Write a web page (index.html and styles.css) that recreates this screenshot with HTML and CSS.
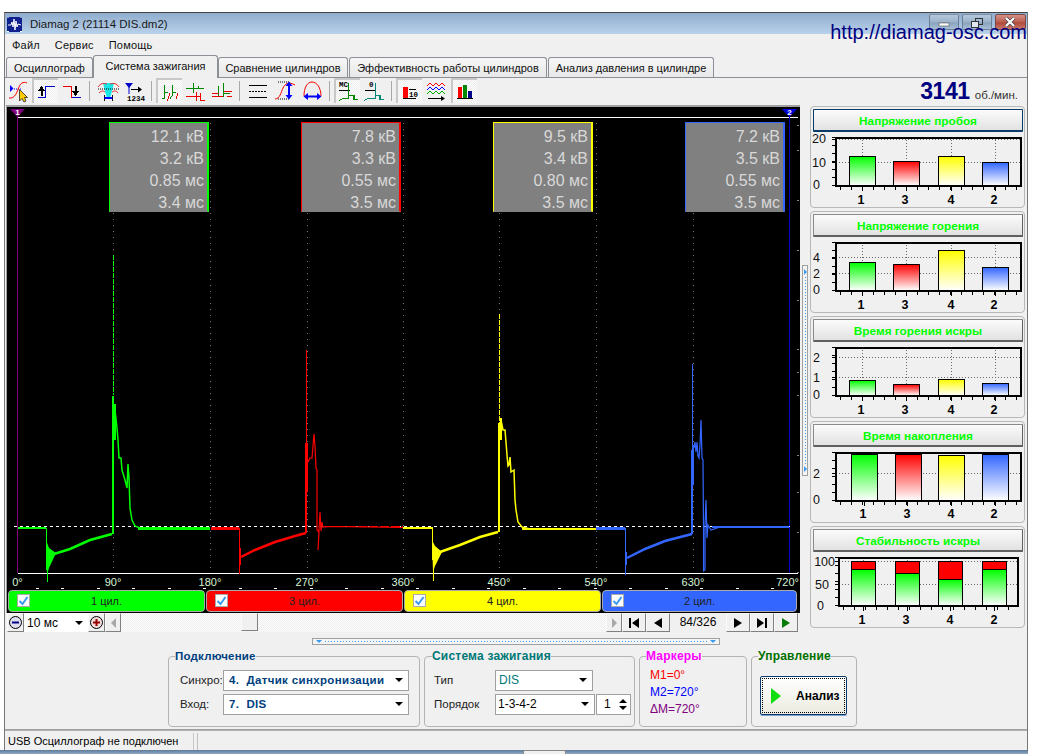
FILE: index.html
```html
<!DOCTYPE html>
<html lang="ru">
<head>
<meta charset="utf-8">
<title>Diamag 2</title>
<link rel="stylesheet" href="styles.css">
</head>
<body>
<div class="window">
  <header class="titlebar">
    <svg class="app-icon" viewBox="0 0 15 15" width="15" height="15"><rect width="15" height="15" fill="#10208c"/><path d="M0 0h2M13 0h2M0 14.500h2M13 14.500h2" stroke="#fff"/><path d="M1 8H4L5 5 6 10 7 2 8 13 9 4 10 10 11 7 14 8" fill="none" stroke="#fff"/></svg>
    <span class="title-text">Diamag 2 (21114 DIS.dm2)</span>
    <div class="win-buttons">
      <div class="win-btn"><svg viewBox="0 0 30 16" width="30" height="16"><rect x="10" y="9" width="10" height="3" fill="#fff" stroke="#555" stroke-width=".6"/></svg></div>
      <div class="win-btn"><svg viewBox="0 0 30 16" width="30" height="16"><rect x="13.500" y="4.500" width="7" height="6" fill="none" stroke="#333"/><rect x="9.500" y="7.500" width="7" height="6" fill="#dfe8f0" stroke="#333"/></svg></div>
      <div class="win-btn win-close"><svg viewBox="0 0 30 16" width="30" height="16"><path d="M11 4L19 12M19 4L11 12" stroke="#444" stroke-width="3.600"/><path d="M11 4L19 12M19 4L11 12" stroke="#fff" stroke-width="2.200"/></svg></div>
    </div>
  </header>
  <a class="site-url">http://diamag-osc.com</a>
  <nav class="menu"><span>Файл</span><span>Сервис</span><span>Помощь</span></nav>
  <div class="tabs">
    <div class="tab tab-1">Осциллограф</div>
    <div class="tab tab-2 active">Система зажигания</div>
    <div class="tab tab-3">Сравнение цилиндров</div>
    <div class="tab tab-4">Эффективность работы цилиндров</div>
    <div class="tab tab-5">Анализ давления в цилиндре</div>
  </div>
  <div class="content">
    <div class="toolbar">
      <div class="tool"><svg viewBox="0 0 26 25"><path d="M4 7L7.500 10.500 4 14Z" fill="#00f"/><path d="M8 11H16" stroke="#00f" stroke-dasharray="1 1"/><path d="M3 20C9 21 11 14 13 9 14 6 17 3 21 5" fill="none" stroke="#f00"/><path d="M13.500 11.500V23L16 20.500 18 24 20 23 18.500 19.500H21.500Z" fill="#fc0" stroke="#222" stroke-width=".8"/></svg></div>
      <div class="tool pressed"><svg viewBox="0 0 26 25" class="crisp"><path d="M6 19.500H13.500V8.500H23" fill="none" stroke="#00c"/><path d="M9.500 18V12" stroke="#000" stroke-width="2"/><path d="M6 13L9.500 8 13 13Z"/></svg></div>
      <div class="tool"><svg viewBox="0 0 26 25" class="crisp"><path d="M5 8.500H13.500V19.500" fill="none" stroke="#e00"/><path d="M13.500 19.500H23" stroke="#00c"/><path d="M17.500 8V14" stroke="#000" stroke-width="2"/><path d="M14 13L17.500 18 21 13Z"/></svg></div>
      <div class="tool-sep sep-a"></div>
      <div class="tool"><svg viewBox="0 0 26 25"><path d="M9 5H20L17.500 15 16 20H13L11.500 15Z" fill="#19e6e6"/><path d="M4 9C7 5 9 5 13 6M16 6C20 5 22 5 25 9M5 15C8 12 9 13 11 14M18 14C20 13 22 12 24 15" fill="none" stroke="#e22"/><path d="M4 11H25" stroke="#000" stroke-dasharray="1 1"/><path d="M10.500 17V23M18.500 17V23" stroke="#111"/><path d="M10.500 20H18.500" stroke="#00f" stroke-width="2"/></svg></div>
      <div class="tool"><svg viewBox="0 0 26 25"><path d="M5 5H13L9 10Z" fill="#00c"/><path d="M9 9V16" stroke="#00c"/><path d="M11 11.500H19" stroke="#000"/><path d="M18 8.500L22 11.500 18 14.500Z"/><text x="7" y="22.500" class="icon-text">1234</text></svg></div>
      <div class="tool-sep sep-b"></div>
      <div class="tool pressed"><svg viewBox="0 0 26 25" class="crisp"><path d="M6 20.500H8.500V7M8.500 14.500H11.500M14 20.500L16.500 17.500V7M16.500 14.500H20" fill="none" stroke="#080"/><path d="M11.500 23L14 15M20 20.500L22 15" fill="none" stroke="#e00"/></svg></div>
      <div class="tool"><svg viewBox="0 0 26 25" class="crisp"><path d="M4 10.500H11.500M11.500 5V15M11.500 10.500H16.500V8M16.500 10.500H22" fill="none" stroke="#080"/><path d="M4 18.500H14.500V14M14.500 23V18.500H18.500V15M18.500 18.500V22H23" fill="none" stroke="#e00"/></svg></div>
      <div class="tool"><svg viewBox="0 0 26 25" class="crisp"><path d="M10.500 8V18H15.500V5M15.500 15H22" fill="none" stroke="#080"/><path d="M4 15.500H10.500M15.500 13.500H24M4 18.500H15M19 18.500H24" fill="none" stroke="#e00"/></svg></div>
      <div class="tool-sep sep-c"></div>
      <div class="tool"><svg viewBox="0 0 26 25" class="crisp"><path d="M5 7.500H23M5 19.500H23" stroke="#000"/><path d="M5 13.500H23" stroke="#000" stroke-dasharray="2 1"/></svg></div>
      <div class="tool"><svg viewBox="0 0 26 25"><path d="M5 21C10 21 11 14 13 10 15 6 18 3 25 7" fill="none" stroke="#f00"/><path d="M8 4H19M8 21H19" stroke="#000" stroke-dasharray="1 1"/><path d="M19 7V18" stroke="#00f" stroke-width="2"/><path d="M15.500 8L19 3.500 22.500 8ZM15.500 17L19 21.500 22.500 17Z" fill="#00f"/></svg></div>
      <div class="tool"><svg viewBox="0 0 26 25"><path d="M8 18C8 10 11 4 16 4 21 4 25 10 25 18" fill="none" stroke="#f00"/><path d="M11 18.500H22" stroke="#00f" stroke-width="2"/><path d="M12 15L7.500 18.500 12 22ZM21 15L25.500 18.500 21 22Z" fill="#00f"/></svg></div>
      <div class="tool-sep sep-d"></div>
      <div class="tool pressed"><svg viewBox="0 0 26 25" class="crisp"><text x="5" y="9" class="icon-text">MC</text><path d="M5 12.500H16" stroke="#000"/><path d="M5 22.500L9 20.500H14.500V5M14.500 17.500H20V21.500H24" fill="none" stroke="#080" stroke-width="1.200"/></svg></div>
      <div class="tool"><svg viewBox="0 0 26 25" class="crisp"><text x="9" y="9" class="icon-text">0</text><path d="M5 12.500H15" stroke="#000"/><path d="M4 22.500L8 20.500H15.500V5M15.500 17.500H20V21.500H24" fill="none" stroke="#087" stroke-width="1.200"/></svg></div>
      <div class="tool-sep sep-e"></div>
      <div class="tool pressed"><svg viewBox="0 0 26 25" class="crisp"><rect x="7" y="9" width="4.500" height="11" fill="#f00"/><path d="M7 20.500H20M13 11.500H20" stroke="#000"/><text x="13" y="19" class="icon-text">10</text></svg></div>
      <div class="tool tool-wide"><svg viewBox="0 0 29 25" width="29" height="25"><path d="M5 8L8 5 11 8 14 5 17 8 20 5 23 8" fill="none" stroke="#f00"/><path d="M5 12L8 9 11 12 14 9 17 12 20 9 23 12" fill="none" stroke="#00f"/><path d="M5 16L8 13 11 16 14 13 17 16 20 13 23 16" fill="none" stroke="#0a0"/><path d="M6 20.500H20" stroke="#000"/><path d="M19 18L23 20.500 19 23Z"/></svg></div>
      <div class="tool pressed"><svg viewBox="0 0 26 25" class="crisp"><rect x="7" y="9" width="4" height="11" fill="#f00"/><rect x="12" y="7" width="4" height="13" fill="#080"/><rect x="17" y="13" width="4" height="7" fill="#008"/><path d="M6 20.500H22" stroke="#000"/></svg></div>
      <div class="rpm"><b>3141</b><span>об./мин.</span></div>
    </div>

    <div class="work">
      <div class="left-col">
        <div class="scope">
          <svg class="scope-svg crisp" viewBox="7 107 793 483" width="793" height="483">
            <path d="M113 117V573M210 117V573M307 117V573M403 117V573M499 117V573M596 117V573M693 117V573" stroke="#777" stroke-dasharray="1 5"/>
            <path d="M18 117.500H798M18 573.500H798" stroke="#fff"/>
            <path d="M17.500 115V573" stroke="#800080"/>
            <path d="M789.500 115V573" stroke="#0000c8"/>
            <path d="M797 125H799M797 150H799M797 200H799M797 250H799M797 300H799M797 349H799M797 372H799M797 395H799M797 455H799M797 492H799M797 532H799M797 572H799" stroke="#888"/>
            <path d="M10 109H25L17.500 117Z" fill="#800080" shape-rendering="auto"/>
            <path d="M782 109H797L789.500 117Z" fill="#0000e0" shape-rendering="auto"/>
            <text x="17.500" y="115" class="flag">1</text>
            <text x="789.500" y="115" class="flag">2</text>
            <path d="M14 526.500H790" stroke="#fff" stroke-dasharray="3 3"/>

            <g class="trace" stroke="#00ff00" fill="#00ff00">
              <path d="M18 528H46" stroke-width="2"/>
              <path d="M46 528V570M47.500 545V582" stroke-width="1"/>
              <path d="M46 540L49 548 56 553 49 568 47 575Z" stroke="none" shape-rendering="auto"/>
              <path d="M54 554L70 549 90 540 112 534" fill="none" stroke-width="2.500" shape-rendering="auto"/>
              <path d="M112.500 534V396" stroke-width="2"/>
              <path d="M113.500 255V395" stroke-dasharray="5 1"/>
              <path d="M113 400V470M115 404V440" stroke-width="2"/>
              <path d="M115 410L117 428 118 440 119 458 121 458 122 470 125 480 127 488 128 464 129 478 130 508 132 520 135 526 140 528" fill="none" stroke-width="1.500" shape-rendering="auto"/>
              <path d="M138 528.500H210" stroke-width="3"/>
            </g>
            <g class="trace" stroke="#ff0000" fill="#ff0000">
              <path d="M211 528.500H239" stroke-width="2.500"/>
              <path d="M239.500 528V574M240.500 548V565" stroke-width="1.500"/>
              <path d="M241 557L255 550 275 542 295 536 306 533" fill="none" stroke-width="2.500" shape-rendering="auto"/>
              <path d="M306 533V443" stroke-width="2"/>
              <path d="M306.500 350V445" stroke-width="1.500"/>
              <path d="M307.500 443V492" stroke-width="1.500"/>
              <path d="M308 462L310 458 312 458 313 446 314 434 315 446 316 468 317 470 317 530 319 532 318 550 320 512 321 531 322 522 323 527 330 526.500 403 527.500" fill="none" stroke-width="1.200" shape-rendering="auto"/>
              <path d="M325 526H403" stroke-width="1" stroke-dasharray="9 2"/>
            </g>
            <g class="trace" stroke="#ffff00" fill="#ffff00">
              <path d="M403 527.500H432" stroke-width="2"/>
              <path d="M432.500 527V560M433.500 545V581" stroke-width="1"/>
              <path d="M432 540L435 546 442 552 435 566 433 572Z" stroke="none" shape-rendering="auto"/>
              <path d="M440 552L460 545 480 537 498 532" fill="none" stroke-width="2.500" shape-rendering="auto"/>
              <path d="M498.500 532V425" stroke-width="2"/>
              <path d="M499.500 314V423" stroke-dasharray="5 1"/>
              <path d="M499 423V476M501 418V440" stroke-width="2"/>
              <path d="M501 420L503 430 505 430 506 442 507 455 508 466 509 465 510 457 511 472 514 470 515 500 516 510 518 522 522 527 530 529" fill="none" stroke-width="1.500" shape-rendering="auto"/>
              <path d="M522 529H596" stroke-width="2.500"/>
            </g>
            <g class="trace" stroke="#3366ff" fill="#3366ff">
              <path d="M596 528.500H625" stroke-width="2.500"/>
              <path d="M625.500 528V575M626.500 552V565" stroke-width="1.500"/>
              <path d="M627 558L645 549 665 541 692 534" fill="none" stroke-width="2.500" shape-rendering="auto"/>
              <path d="M691.500 534V450" stroke-width="2"/>
              <path d="M692.500 364V450" stroke-width="1.500"/>
              <path d="M693 445V485" stroke-width="1.500"/>
              <path d="M694 448L695 442 696 452 697 442 698 456 699 458 700 445 701 420 702 458 703 460 703.500 528 703.500 571 705 570 705 525 706 500 707 538 708 525 711 530 720 527" fill="none" stroke-width="1.200" shape-rendering="auto"/>
              <path d="M712 527H789" stroke-width="1.500"/>
            </g>

            <path class="tick-row" d="M36 588.500H39M61 588.500H64M97 588.500H100M132 588.500H135M168 588.500H171M203 588.500H206M239 588.500H242M274 588.500H277M310 588.500H313M345 588.500H348M381 588.500H384M416 588.500H419M452 588.500H455M487 588.500H490M523 588.500H526M558 588.500H561M594 588.500H597M629 588.500H632M665 588.500H668M700 588.500H703M736 588.500H739M771 588.500H774" stroke="#fff"/>
            <g class="deg">
              <text x="17.500" y="586">0°</text><text x="113" y="586">90°</text><text x="210" y="586">180°</text><text x="307" y="586">270°</text><text x="403" y="586">360°</text><text x="499" y="586">450°</text><text x="596" y="586">540°</text><text x="693" y="586">630°</text><text x="799" y="586" class="deg-end">720°</text>
            </g>
          </svg>
          <div class="readout r-1"><span>12.1 кВ</span><span>3.2 кВ</span><span>0.85 мс</span><span>3.4 мс</span></div>
          <div class="readout r-3"><span>7.8 кВ</span><span>3.3 кВ</span><span>0.55 мс</span><span>3.5 мс</span></div>
          <div class="readout r-4"><span>9.5 кВ</span><span>3.4 кВ</span><span>0.80 мс</span><span>3.5 мс</span></div>
          <div class="readout r-2"><span>7.2 кВ</span><span>3.5 кВ</span><span>0.55 мс</span><span>3.5 мс</span></div>
          <div class="legend">
            <div class="cyl c-g"><i class="check"><svg viewBox="0 0 11 11" width="11" height="11"><path d="M1.500 6L4.500 9 9.500 2" fill="none" stroke="#3a9af0" stroke-width="2"/></svg></i>1 цил.</div>
            <div class="cyl c-r"><i class="check"><svg viewBox="0 0 11 11" width="11" height="11"><path d="M1.500 6L4.500 9 9.500 2" fill="none" stroke="#3a9af0" stroke-width="2"/></svg></i>3 цил.</div>
            <div class="cyl c-y"><i class="check"><svg viewBox="0 0 11 11" width="11" height="11"><path d="M1.500 6L4.500 9 9.500 2" fill="none" stroke="#3a9af0" stroke-width="2"/></svg></i>4 цил.</div>
            <div class="cyl c-b"><i class="check"><svg viewBox="0 0 11 11" width="11" height="11"><path d="M1.500 6L4.500 9 9.500 2" fill="none" stroke="#3a9af0" stroke-width="2"/></svg></i>2 цил.</div>
          </div>
        </div>
        <div class="scroll-row">
          <div class="sbtn s-17"><svg viewBox="0 0 15 15" width="15" height="15"><circle cx="7.500" cy="7.500" r="6" fill="#dde" stroke="#000"/><path d="M4 7.500H11" stroke="#008" stroke-width="2"/></svg></div>
          <div class="time-select"><span>10 мс</span><i class="caret"></i></div>
          <div class="sbtn s-17"><svg viewBox="0 0 15 15" width="15" height="15"><circle cx="7.500" cy="7.500" r="6" fill="#edd" stroke="#000"/><path d="M4 7.500H11M7.500 4V11" stroke="#900" stroke-width="2"/></svg></div>
          <div class="sbtn s-16"><i class="tri-left"></i></div>
          <div class="track"><div class="thumb"></div></div>
          <div class="sbtn s-16"><i class="tri-right"></i></div>
          <div class="sbtn s-23"><svg viewBox="0 0 12 10" width="12" height="10"><path d="M1 0H3V10H1ZM11 0V10L4 5Z"/></svg></div>
          <div class="sbtn s-23"><svg viewBox="0 0 12 10" width="12" height="10"><path d="M10 0V10L2 5Z"/></svg></div>
          <div class="counter">84/326</div>
          <div class="sbtn s-23"><svg viewBox="0 0 12 10" width="12" height="10"><path d="M2 0V10L10 5Z"/></svg></div>
          <div class="sbtn s-23"><svg viewBox="0 0 12 10" width="12" height="10"><path d="M1 0V10L8 5ZM9 0H11V10H9Z"/></svg></div>
          <div class="sbtn s-23"><svg viewBox="0 0 12 10" width="12" height="10"><path d="M2 0V10L10 5Z" fill="#0a7a0a"/></svg></div>
        </div>
      </div>

      <div class="vsplit"><i class="sp-tri"></i><i class="sp-dots"></i><i class="sp-tri"></i></div>

      <aside class="right-col">
        <svg class="defs-holder" width="0" height="0"><defs>
          <linearGradient id="gg" x1="0" y1="0" x2="0" y2="1"><stop offset="0" stop-color="#0f0"/><stop offset="1" stop-color="#fff"/></linearGradient>
          <linearGradient id="gr" x1="0" y1="0" x2="0" y2="1"><stop offset="0" stop-color="#f00"/><stop offset="1" stop-color="#fff"/></linearGradient>
          <linearGradient id="gy" x1="0" y1="0" x2="0" y2="1"><stop offset="0" stop-color="#ff0"/><stop offset="1" stop-color="#fff"/></linearGradient>
          <linearGradient id="gb" x1="0" y1="0" x2="0" y2="1"><stop offset="0" stop-color="#36f"/><stop offset="1" stop-color="#fff"/></linearGradient>
        </defs></svg>

        <section class="chart-panel">
          <div class="chart-btn focus">Напряжение пробоя</div>
          <svg class="chart" viewBox="811 133 213 74" width="213" height="74">
            <path class="grid" d="M836 139.500H1021M836 162.500H1021M862.500 137V186M906.500 137V186M951.500 137V186M995.500 137V186"/>
            <rect class="bar" x="849.500" y="156.500" width="26" height="29" fill="url(#gg)"/><rect class="bar" x="893.500" y="161.500" width="26" height="24" fill="url(#gr)"/><rect class="bar" x="938.500" y="156.500" width="26" height="29" fill="url(#gy)"/><rect class="bar" x="982.500" y="162.500" width="26" height="23" fill="url(#gb)"/>
            <rect class="frame" x="836" y="137.500" width="185" height="48"/>
            <path class="ticks-y" d="M834 137V186"/><path class="ticks-x" d="M840 188H1021"/>
            <path class="ticks-m" d="M832 139.500H836M832 162.500H836M832 185.500H836M862.500 186V191M906.500 186V191M951.500 186V191M995.500 186V191"/>
            <g class="ylab"><text x="826" y="143">20</text><text x="826" y="167">10</text><text x="820" y="189">0</text></g>
            <g class="xlab"><text x="861" y="204">1</text><text x="905" y="204">3</text><text x="951" y="204">4</text><text x="994" y="204">2</text></g>
          </svg>
        </section>

        <section class="chart-panel">
          <div class="chart-btn">Напряжение горения</div>
          <svg class="chart" viewBox="811 133 213 74" width="213" height="74">
            <path class="grid" d="M836 152.500H1021M836 168.500H1021M862.500 137V186M906.500 137V186M951.500 137V186M995.500 137V186"/>
            <rect class="bar" x="849.500" y="157.500" width="26" height="28" fill="url(#gg)"/><rect class="bar" x="893.500" y="159.500" width="26" height="26" fill="url(#gr)"/><rect class="bar" x="938.500" y="145.500" width="26" height="40" fill="url(#gy)"/><rect class="bar" x="982.500" y="162.500" width="26" height="23" fill="url(#gb)"/>
            <rect class="frame" x="836" y="137.500" width="185" height="48"/>
            <path class="ticks-y" d="M834 137V186"/><path class="ticks-x" d="M840 188H1021"/>
            <path class="ticks-m" d="M832 152.500H836M832 168.500H836M832 185.500H836M862.500 186V191M906.500 186V191M951.500 186V191M995.500 186V191"/>
            <g class="ylab"><text x="820" y="157">4</text><text x="820" y="173">2</text><text x="820" y="189">0</text></g>
            <g class="xlab"><text x="861" y="204">1</text><text x="905" y="204">3</text><text x="951" y="204">4</text><text x="994" y="204">2</text></g>
          </svg>
        </section>

        <section class="chart-panel">
          <div class="chart-btn">Время горения искры</div>
          <svg class="chart" viewBox="811 133 213 74" width="213" height="74">
            <path class="grid" d="M836 147.500H1021M836 167.500H1021M862.500 137V186M906.500 137V186M951.500 137V186M995.500 137V186"/>
            <rect class="bar" x="849.500" y="170.500" width="26" height="15" fill="url(#gg)"/><rect class="bar" x="893.500" y="174.500" width="26" height="11" fill="url(#gr)"/><rect class="bar" x="938.500" y="169.500" width="26" height="16" fill="url(#gy)"/><rect class="bar" x="982.500" y="173.500" width="26" height="12" fill="url(#gb)"/>
            <rect class="frame" x="836" y="137.500" width="185" height="48"/>
            <path class="ticks-y" d="M834 137V186"/><path class="ticks-x" d="M840 188H1021"/>
            <path class="ticks-m" d="M832 147.500H836M832 167.500H836M832 185.500H836M862.500 186V191M906.500 186V191M951.500 186V191M995.500 186V191"/>
            <g class="ylab"><text x="820" y="152">2</text><text x="820" y="172">1</text><text x="820" y="189">0</text></g>
            <g class="xlab"><text x="861" y="204">1</text><text x="905" y="204">3</text><text x="951" y="204">4</text><text x="994" y="204">2</text></g>
          </svg>
        </section>

        <section class="chart-panel">
          <div class="chart-btn">Время накопления</div>
          <svg class="chart" viewBox="811 133 213 74" width="213" height="74">
            <path class="grid" d="M836 158.500H1021M864.500 137V186M907.500 137V186M951.500 137V186M995.500 137V186"/>
            <rect class="bar" x="851.500" y="139.500" width="26" height="46" fill="url(#gg)"/><rect class="bar" x="895.500" y="139.500" width="26" height="46" fill="url(#gr)"/><rect class="bar" x="938.500" y="140.500" width="26" height="45" fill="url(#gy)"/><rect class="bar" x="982.500" y="139.500" width="26" height="46" fill="url(#gb)"/>
            <rect class="frame" x="836" y="137.500" width="185" height="48"/>
            <path class="ticks-y" d="M834 137V186"/><path class="ticks-x" d="M840 188H1021"/>
            <path class="ticks-m" d="M832 158.500H836M832 185.500H836M864.500 186V191M907.500 186V191M951.500 186V191M995.500 186V191"/>
            <g class="ylab"><text x="820" y="163">2</text><text x="820" y="189">0</text></g>
            <g class="xlab"><text x="863" y="203">1</text><text x="907" y="203">3</text><text x="951" y="203">4</text><text x="994" y="203">2</text></g>
          </svg>
        </section>

        <section class="chart-panel">
          <div class="chart-btn">Стабильность искры</div>
          <svg class="chart" viewBox="811 133 213 74" width="213" height="74">
            <path class="grid" d="M839 141.500H1018M839 164.500H1018M863.500 137V186M907.500 137V186M950.500 137V186M994.500 137V186"/>
            <rect class="bar" x="851.500" y="141.500" width="24" height="44" fill="#f00"/><rect class="bar" x="851.500" y="149.500" width="24" height="36" fill="url(#gg)"/>
            <rect class="bar" x="895.500" y="141.500" width="24" height="44" fill="#f00"/><rect class="bar" x="895.500" y="153.500" width="24" height="32" fill="url(#gg)"/>
            <rect class="bar" x="938.500" y="141.500" width="24" height="44" fill="#f00"/><rect class="bar" x="938.500" y="159.500" width="24" height="26" fill="url(#gg)"/>
            <rect class="bar" x="982.500" y="141.500" width="24" height="44" fill="#f00"/><rect class="bar" x="982.500" y="149.500" width="24" height="36" fill="url(#gg)"/>
            <rect class="frame" x="839" y="137.500" width="179" height="48"/>
            <path class="ticks-y" d="M837 137V186"/><path class="ticks-x" d="M843 188H1018"/>
            <path class="ticks-m" d="M835 141.500H839M835 164.500H839M835 185.500H839M863.500 186V191M907.500 186V191M950.500 186V191M994.500 186V191"/>
            <g class="ylab"><text x="835" y="146">100</text><text x="829" y="169">50</text><text x="824" y="190">0</text></g>
            <g class="xlab"><text x="862" y="204">1</text><text x="906" y="204">3</text><text x="950" y="204">4</text><text x="994" y="204">2</text></g>
          </svg>
        </section>
      </aside>
    </div>

    <div class="hsplit"><div class="hsplit-bar"><i class="sp-tri-d"></i><i class="sp-dots-h"></i><i class="sp-tri-d"></i></div></div>

    <div class="groups">
      <fieldset class="group g-conn">
        <legend class="lg-conn">Подключение</legend>
        <div class="field"><label>Синхро:</label><div class="combo combo-wide bold-blue"><span>4.&nbsp; Датчик синхронизации</span><i class="caret"></i></div></div>
        <div class="field"><label>Вход:</label><div class="combo combo-wide bold-blue"><span>7.&nbsp; DIS</span><i class="caret"></i></div></div>
      </fieldset>
      <fieldset class="group g-ign">
        <legend class="lg-ign">Система зажигания</legend>
        <div class="field"><label>Тип</label><div class="combo combo-mid teal"><span>DIS</span><i class="caret"></i></div></div>
        <div class="field"><label>Порядок</label><div class="combo combo-order"><span>1-3-4-2</span><i class="caret"></i></div><div class="spin"><span>1</span><div class="spin-arrows"><i class="up"></i><i class="down"></i></div></div></div>
      </fieldset>
      <fieldset class="group g-mark">
        <legend class="lg-mark">Маркеры</legend>
        <div class="m-red">M1=0°</div>
        <div class="m-blue">M2=720°</div>
        <div class="m-purple">ΔM=720°</div>
      </fieldset>
      <fieldset class="group g-ctl">
        <legend class="lg-ctl">Управление</legend>
        <div class="analyze"><div class="analyze-inner"><i class="play"></i><span>Анализ</span></div></div>
      </fieldset>
    </div>
    <div class="statusbar"><div class="st-a">USB Осциллограф не подключен</div><div class="st-b"></div></div>
  </div>
</div>
<div class="taskbar"><div class="task-tab"></div></div>
</body>
</html>
```
FILE: styles.css
```css
* { box-sizing: border-box; }
html, body { margin: 0; padding: 0; }
body { width: 1040px; height: 754px; overflow: hidden; background: #fff; font-family: "Liberation Sans", Arial, sans-serif; font-size: 12px; color: #000; padding-top: 12px; }
i { display: block; font-style: normal; }

.window { position: relative; margin-left: 4px; width: 1024px; height: 738px; background: #f0f0f0; border-left: 1px solid #777; border-right: 1px solid #777; border-top: 1px solid #444; display: flex; flex-direction: column; }

.titlebar { height: 21px; flex: none; display: flex; align-items: center; padding-left: 2px; background: linear-gradient(#8fadcd, #b9d1ea); }
.app-icon { display: block; margin-top: 1px; }
.title-text { margin-left: 8px; font-size: 11.500px; color: #1a1a1a; letter-spacing: -.03px; white-space: nowrap; }
.win-buttons { margin-left: auto; display: flex; gap: 3px; margin-right: 1px; margin-top: -3px; }
.win-btn { width: 30px; height: 16px; border: 1px solid #6b7f95; border-top-color: #7b8fa5; border-radius: 2px; background: linear-gradient(#b5c8dc, #9cb3cb 50%, #8aa3bd 55%, #a7bfd6); overflow: hidden; }
.win-btn svg { display: block; margin: -1px; }
.win-close { width: 31px; background: linear-gradient(#d29187, #bc5d4e 50%, #b04a3b 55%, #c7766a); border-color: #7a4a48; }
.site-url { position: absolute; right: 0; top: 8px; font-size: 20px; line-height: 23px; color: #000080; }

.menu { height: 21px; flex: none; display: flex; align-items: center; gap: 15px; padding-left: 7px; font-size: 11px; letter-spacing: .2px; color: #111; }

.tabs { height: 22px; flex: none; display: flex; align-items: flex-end; padding-left: 1px; position: relative; z-index: 1; }
.tab { height: 20px; border: 1px solid #8b8f96; border-bottom: 0; border-radius: 3px 3px 0 0; background: linear-gradient(#f6f6f6, #e8e8e8); display: flex; align-items: center; justify-content: center; font-size: 11px; color: #111; margin-right: 1px; white-space: nowrap; }
.tab.active { height: 23px; background: #f0f0f0; margin-bottom: -1px; padding-bottom: 3px; margin-right: 0; }
.tab-1 { width: 87px; margin-right: 0; }
.tab-2 { width: 125px; }
.tab-3 { width: 130px; }
.tab-4 { width: 198px; }
.tab-5 { width: 166px; }

.content { flex: 1; min-height: 0; border-top: 1px solid #8b8f96; display: flex; flex-direction: column; }
.toolbar { height: 27px; flex: none; display: flex; align-items: flex-start; padding: 0 0 0 1px; }
.crisp { shape-rendering: crispEdges; }
.tool { width: 26px; height: 25px; flex: none; }
.tool svg { display: block; width: 26px; height: 25px; }
.tool-wide { width: 29px; }
.tool-wide svg { width: 29px; }
.pressed { border-top: 2px solid #c8c8c8; border-left: 2px solid #c8c8c8; background: repeating-conic-gradient(#fff 0 25%, #ececec 0 50%) 0 0 / 2px 2px; }
.pressed svg { margin: -2px 0 0 -2px; }
.icon-text { font-family: "Liberation Mono", monospace; font-size: 7.500px; font-weight: bold; shape-rendering: auto; }
.tool-sep { flex: none; width: 1px; height: 20px; margin-top: 3px; background: #a8a8a8; }
.sep-a { margin: 3px 4px 0 5px; }
.sep-b { margin: 3px 4px 0 5px; }
.sep-c { margin: 3px 4px 0 5px; }
.sep-d { margin: 3px 4px 0 7px; }
.sep-e { margin: 3px 4px 0 5px; }
.rpm { margin-left: auto; margin-right: 9px; display: flex; align-items: baseline; gap: 5px; color: #333; font-size: 11.500px; line-height: 27px; }
.rpm b { font-size: 23px; color: #000080; letter-spacing: -.4px; }

.work { display: flex; height: 528px; flex: none; }
.left-col { width: 794px; flex: none; margin-left: 1px; }
.scope { position: relative; height: 508px; background: #000; border-top: 2px solid #a0a0a0; border-left: 1px solid #a0a0a0; }
.scope-svg { display: block; }
.trace path { fill: none; }
.trace path[stroke="none"] { fill: inherit; }
.flag { fill: #fff; font-size: 8px; font-weight: bold; text-anchor: middle; }
.deg text { fill: #d8f5d8; font-size: 11px; text-anchor: middle; }
.deg text.deg-end { text-anchor: end; }
.readout { position: absolute; top: 15px; width: 100px; height: 90px; background: #808080; padding: 3px 3px 0 0; display: flex; flex-direction: column; align-items: flex-end; color: #d8d8d8; font-size: 16px; line-height: 22px; border-style: solid; border-width: 1px 2px 1px 1px; border-bottom-color: #808080; }
.r-1 { left: 102px; border-color: #0f0 #0f0 #808080 #0f0; }
.r-3 { left: 294px; border-color: #f00 #f00 #808080 #f00; }
.r-4 { left: 486px; border-color: #ff0 #ff0 #808080 #ff0; }
.r-2 { left: 678px; border-color: #36f #36f #808080 #36f; }
.legend { display: flex; height: 23px; padding: 0 1px 1px 1px; gap: 1px; }
.cyl { width: 197px; height: 22px; border: 1px solid #aaa; border-radius: 4px; display: flex; align-items: center; justify-content: center; position: relative; font-size: 11px; color: #222; }
.c-g { background: #0f0; }
.c-r { background: #f00; }
.c-y { background: #ff0; }
.c-b { background: #36f; width: 195px; }
.check { position: absolute; left: 8px; top: 3px; width: 13px; height: 13px; background: #fff; border: 1px solid #aaa; }
.check svg { display: block; }

.scroll-row { height: 20px; display: flex; background: #f0f0f0; padding: 0 2px 0 1px; }
.sbtn { flex: none; height: 19px; display: flex; align-items: center; justify-content: center; background: #f0f0f0; border: 1px solid; border-color: #fafafa #808080 #808080 #fafafa; }
.sbtn svg { display: block; }
.s-17 { width: 17px; }
.s-16 { width: 16px; }
.s-23 { width: 24px; }
.time-select { flex: none; width: 64px; height: 19px; background: #fff; display: flex; align-items: center; justify-content: space-between; padding: 0 5px 0 3px; font-size: 12px; }
.caret { flex: none; width: 0; height: 0; border-style: solid; border-width: 4px 4px 0 4px; border-color: #000 transparent transparent transparent; }
.tri-left { width: 0; height: 0; border-style: solid; border-width: 5px 5px 5px 0; border-color: transparent #a8a8a8 transparent transparent; }
.tri-right { width: 0; height: 0; border-style: solid; border-width: 5px 0 5px 5px; border-color: transparent transparent transparent #a8a8a8; }
.track { flex: 1; height: 19px; background: repeating-conic-gradient(#fff 0 25%, #ececec 0 50%) 0 0 / 2px 2px; padding-left: 120px; }
.thumb { width: 17px; height: 18px; background: #f0f0f0; border: 1px solid; border-color: #fafafa #808080 #808080 #fafafa; }
.counter { flex: none; width: 56px; height: 19px; line-height: 19px; text-align: center; font-size: 12px; }

.vsplit { width: 6px; height: 211px; margin: 160px 2px 0 2px; flex: none; border: 1px solid #a0a0a0; display: flex; flex-direction: column; align-items: center; justify-content: space-between; padding: 3px 0; background: #f4f4f4; }
.sp-tri { width: 0; height: 0; border-style: solid; border-width: 3px 0 3px 3px; border-color: transparent transparent transparent #3a9af0; }
.sp-dots { flex: 1; width: 1px; margin: 2px 0; background: repeating-linear-gradient(#3a9af0 0 1px, transparent 1px 3px); }
.right-col { width: 215px; flex: none; margin-top: 1px; display: flex; flex-direction: column; gap: 3px; }
.defs-holder { position: absolute; }
.chart-panel { height: 102px; flex: none; border: 1px solid #b8b8b8; border-radius: 4px; padding: 2px 1px 0 2px; }
.chart-btn { height: 23px; width: 210px; padding-top: 1px; border: 1px solid #606060; border-bottom-width: 2px; border-color: #8a8a8a #606060 #606060 #8a8a8a; border-radius: 1px; background: linear-gradient(#fbfbfb, #e2e2e2); color: #0f0; font-weight: bold; font-size: 11.800px; display: flex; align-items: center; justify-content: center; white-space: nowrap; }
.chart-btn.focus { border-color: #0a3a6a; }
.chart { display: block; margin: 1px 0 0 -2px; }
.grid { fill: none; stroke: #6a6a6a; stroke-dasharray: 1 2; shape-rendering: crispEdges; }
.bar { stroke: #000; stroke-width: 1; shape-rendering: crispEdges; }
.frame { fill: none; stroke: #000; stroke-width: 2; shape-rendering: crispEdges; }
.ticks-y { stroke: #000; stroke-width: 4; stroke-dasharray: 1 7; fill: none; shape-rendering: crispEdges; }
.ticks-x { stroke: #000; stroke-width: 3; stroke-dasharray: 1 10; fill: none; shape-rendering: crispEdges; }
.ticks-m { stroke: #000; fill: none; shape-rendering: crispEdges; }
.ylab text { font-size: 12.500px; text-anchor: end; fill: #111; }
.xlab text { font-size: 12.500px; font-weight: bold; text-anchor: middle; fill: #000; }

.hsplit { height: 7px; margin-top: 5px; flex: none; display: flex; justify-content: center; }
.hsplit-bar { width: 408px; height: 7px; border: 1px solid #a0a0a0; display: flex; align-items: center; padding: 0 3px; gap: 3px; background: #f4f4f4; }
.sp-tri-d { flex: none; width: 0; height: 0; border-style: solid; border-width: 3px 3px 0 3px; border-color: #3a9af0 transparent transparent transparent; }
.sp-dots-h { flex: 1; height: 1px; background: repeating-linear-gradient(90deg, #3a9af0 0 1px, transparent 1px 3px); }

.groups { display: flex; gap: 4px; height: 80px; flex: none; padding: 0 0 0 163px; margin-top: 5px; border-bottom: 1px solid #a0a0a0; }
.group { margin: 0; min-width: 0; padding: 0; height: 77px; border: 1px solid #b4b4b4; border-radius: 4px; }
.group legend { padding: 0; font-weight: bold; font-size: 12px; line-height: 13px; letter-spacing: .2px; white-space: nowrap; }
.g-conn { width: 252px; padding: 5px 0 0 11px; }
.g-ign { width: 211px; padding: 5px 0 0 9px; }
.g-mark { width: 108px; padding: 4px 0 0 10px; font-size: 12px; line-height: 17px; }
.g-ctl { width: 106px; padding: 13px 0 0 8px; }
.group .lg-conn { color: #003f7f; margin-left: -5px; font-size: 11.500px; }
.group .lg-ign { color: #007878; margin-left: -2px; }
.group .lg-mark { color: #f0f; margin-left: -4px; }
.group .lg-ctl { color: #007000; margin-left: -2px; }
.field { display: flex; align-items: center; height: 24px; }
.field label { font-size: 11.500px; color: #222; white-space: nowrap; }
.g-conn label { width: 43px; }
.g-ign label { width: 61px; }
.combo { height: 21px; flex: none; background: #fff; border: 1px solid #a0a0a0; display: flex; align-items: center; justify-content: space-between; padding: 0 5px 0 5px; font-size: 12px; white-space: nowrap; }
.combo-wide { width: 186px; }
.combo-mid { width: 98px; padding-left: 3px; }
.combo-order { width: 100px; padding-left: 2px; }
.bold-blue { font-weight: bold; color: #003f7f; font-size: 11.500px; letter-spacing: .35px; }
.teal { color: #007878; }
.spin { width: 35px; height: 21px; flex: none; margin-left: 1px; background: #fff; border: 1px solid #a0a0a0; display: flex; align-items: center; justify-content: space-between; padding: 0 3px 0 7px; font-size: 12px; }
.spin-arrows { display: flex; flex-direction: column; gap: 3px; }
.up { width: 0; height: 0; border-style: solid; border-width: 0 4px 4px 4px; border-color: transparent transparent #000 transparent; }
.down { width: 0; height: 0; border-style: solid; border-width: 4px 4px 0 4px; border-color: #000 transparent transparent transparent; }
.m-red { color: #f00; }
.m-blue { color: #00f; }
.m-purple { color: #800080; }
.analyze { width: 87px; height: 39px; border: 1px solid #0a3a6a; border-radius: 2px; background: linear-gradient(#fff, #ecebe0); padding: 1px; box-shadow: 0 1px 0 #7aa0d0; }
.analyze-inner { height: 100%; border: 1px dotted #000; display: flex; align-items: center; padding-left: 8px; }
.play { width: 0; height: 0; border-style: solid; border-width: 8px 0 8px 10px; border-color: transparent transparent transparent #11dd11; }
.analyze-inner span { margin-left: 15px; font-weight: bold; font-size: 12px; }

.statusbar { height: 20px; flex: none; display: flex; gap: 3px; padding: 2px 0 0 0; border-top: 1px solid #b0b0b0; }
.st-a { width: 189px; padding-left: 3px; border-right: 1px solid #c8c8c8; font-size: 11px; line-height: 16px; white-space: nowrap; }
.st-b { flex: 1; border-left: 1px solid #c0c0c0; }

.taskbar { width: 1028px; height: 4px; background: linear-gradient(#5d7a99, #8fa9c4); display: flex; padding-left: 523px; }
.task-tab { width: 43px; height: 4px; background: #f0f0f0; border: 1px solid #888; border-bottom: 0; border-radius: 2px 2px 0 0; }
```
